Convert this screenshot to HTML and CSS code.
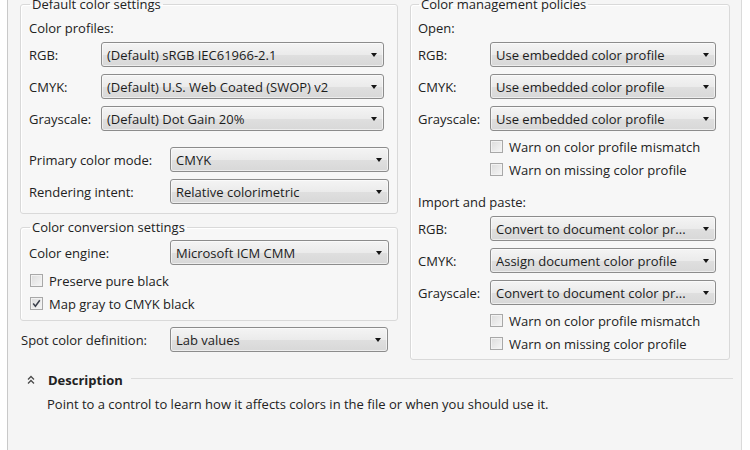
FILE: index.html
```html
<!DOCTYPE html>
<html>
<head>
<meta charset="utf-8">
<link rel="stylesheet" href="styles.css">
</head>
<body>
<div class="window">
  <div class="columns">
    <div class="col-left">
      <fieldset class="group g-default">
        <legend>Default color settings</legend>
        <div class="caption">Color profiles:</div>
        <div class="row first"><span class="label lw-s">RGB:</span><div class="select sw-profile"><span class="value">(Default) sRGB IEC61966-2.1</span><span class="arrow"></span></div></div>
        <div class="row"><span class="label lw-s">CMYK:</span><div class="select sw-profile"><span class="value">(Default) U.S. Web Coated (SWOP) v2</span><span class="arrow"></span></div></div>
        <div class="row"><span class="label lw-s">Grayscale:</span><div class="select sw-profile"><span class="value">(Default) Dot Gain 20%</span><span class="arrow"></span></div></div>
        <div class="row section"><span class="label lw-l">Primary color mode:</span><div class="select sw-mode"><span class="value">CMYK</span><span class="arrow"></span></div></div>
        <div class="row"><span class="label lw-l">Rendering intent:</span><div class="select sw-mode"><span class="value">Relative colorimetric</span><span class="arrow"></span></div></div>
      </fieldset>
      <fieldset class="group g-conv">
        <legend>Color conversion settings</legend>
        <div class="row"><span class="label lw-l">Color engine:</span><div class="select sw-mode"><span class="value">Microsoft ICM CMM</span><span class="arrow"></span></div></div>
        <label class="check first"><span class="box"></span><span>Preserve pure black</span></label>
        <label class="check"><span class="box checked"><svg viewBox="0 0 11 11" width="11" height="11"><path d="M2.2 5.6 L4.4 8.2 L8.8 2.2" fill="none" stroke="#3a3f4a" stroke-width="1.5"/></svg></span><span>Map gray to CMYK black</span></label>
      </fieldset>
      <div class="row spot"><span class="label lw-spot">Spot color definition:</span><div class="select sw-spot"><span class="value">Lab values</span><span class="arrow"></span></div></div>
    </div>
    <div class="col-right">
      <fieldset class="group g-policies">
        <legend>Color management policies</legend>
        <div class="caption">Open:</div>
        <div class="row first"><span class="label lw-s">RGB:</span><div class="select sw-policy"><span class="value">Use embedded color profile</span><span class="arrow"></span></div></div>
        <div class="row"><span class="label lw-s">CMYK:</span><div class="select sw-policy"><span class="value">Use embedded color profile</span><span class="arrow"></span></div></div>
        <div class="row"><span class="label lw-s">Grayscale:</span><div class="select sw-policy"><span class="value">Use embedded color profile</span><span class="arrow"></span></div></div>
        <label class="check indent first"><span class="box"></span><span>Warn on color profile mismatch</span></label>
        <label class="check indent"><span class="box"></span><span>Warn on missing color profile</span></label>
        <div class="caption import">Import and paste:</div>
        <div class="row first"><span class="label lw-s">RGB:</span><div class="select sw-policy"><span class="value">Convert to document color pr...</span><span class="arrow"></span></div></div>
        <div class="row"><span class="label lw-s">CMYK:</span><div class="select sw-policy"><span class="value">Assign document color profile</span><span class="arrow"></span></div></div>
        <div class="row"><span class="label lw-s">Grayscale:</span><div class="select sw-policy"><span class="value">Convert to document color pr...</span><span class="arrow"></span></div></div>
        <label class="check indent first"><span class="box"></span><span>Warn on color profile mismatch</span></label>
        <label class="check indent"><span class="box"></span><span>Warn on missing color profile</span></label>
      </fieldset>
    </div>
  </div>
  <div class="description">
    <div class="desc-head">
      <svg class="chev" viewBox="0 0 8 10" width="8" height="10"><path d="M1 4.5 L4 1.5 L7 4.5 M1 8.5 L4 5.5 L7 8.5" fill="none" stroke="#4a4a4a" stroke-width="1.3"/></svg>
      <span class="desc-title">Description</span>
      <span class="desc-rule"></span>
    </div>
    <p class="desc-text">Point to a control to learn how it affects colors in the file or when you should use it.</p>
  </div>
</div>
</body>
</html>
```
FILE: styles.css
```css
html, body {
  margin: 0;
  padding: 0;
  background: #ffffff;
}
body {
  width: 750px;
  height: 450px;
  overflow: hidden;
  font-family: "Open Sans", "Noto Sans", sans-serif;
  font-size: 13px;
  line-height: 16px;
  color: #222222;
}
.window {
  margin-left: 7px;
  width: 735px;
  height: 450px;
  box-sizing: border-box;
  border-left: 1px solid #c9c9c9;
  border-right: 1px solid #dadada;
  background: #f5f5f5;
  padding: 0 11px 0 12px;
}
.columns {
  display: flex;
  gap: 12px;
  align-items: flex-start;
}
.col-left { width: 378px; }
.col-right { width: 320px; }

.group {
  margin: 0;
  min-width: 0;
  box-sizing: border-box;
  border: 1px solid #d9d9d9;
  border-radius: 3px;
  box-shadow: inset 1px 1px 0 #ffffff;
  background: #f7f7f7;
}
.group legend {
  padding: 0 2px;
  margin-left: 1px;
  line-height: 16px;
}
.g-default {
  margin-top: -4px;
  padding: 8px 8px 9px 8px;
}
.g-conv {
  margin-top: 5px;
  padding: 5px 8px 5px 8px;
}
.g-policies {
  margin-top: -4px;
  padding: 8px 7px 4px 7px;
}
.caption { height: 16px; }
.caption.import { margin-top: 13px; }

.row {
  display: flex;
  align-items: center;
  height: 25px;
  margin-top: 7px;
}
.row.first { margin-top: 6px; }
.g-conv .row:first-of-type { margin-top: 0; }
.row.section { margin-top: 16px; }
.row.spot { margin-top: 6px; }

.label { flex: none; white-space: nowrap; }
.lw-s { width: 72px; }
.lw-l { width: 141px; }
.lw-spot { width: 149px; padding-left: 1px; }

.select {
  flex: none;
  height: 25px;
  box-sizing: border-box;
  display: flex;
  align-items: center;
  border: 1px solid #8c8c8c;
  border-radius: 3px;
  background: linear-gradient(#f4f4f4, #ebebeb 50%, #dfdfdf 52%, #d8d8d8);
  box-shadow: inset 0 0 0 1px rgba(255,255,255,0.55);
  padding: 0 6px 0 5px;
}
.sw-profile { width: 283px; }
.sw-mode { width: 219px; }
.sw-spot { width: 218px; }
.sw-policy { width: 226px; }
.value {
  flex: 1;
  white-space: nowrap;
  overflow: hidden;
  color: #1c1c1c;
}
.arrow {
  flex: none;
  width: 0;
  height: 0;
  border-left: 3.5px solid transparent;
  border-right: 3.5px solid transparent;
  border-top: 4px solid #151515;
}

.check {
  display: flex;
  align-items: center;
  height: 23px;
  padding-left: 1px;
}
.check.first { margin-top: 4px; }
.check.indent { padding-left: 72px; }
.box {
  flex: none;
  width: 13px;
  height: 13px;
  box-sizing: border-box;
  border: 1px solid #a8a8a8;
  background: linear-gradient(135deg, #dcdcdc, #f6f6f6);
  box-shadow: inset 0 0 0 1px #f2f2f2;
  margin-right: 6px;
  display: flex;
  align-items: center;
  justify-content: center;
}
.box svg { display: block; }

.description {
  margin-top: 12px;
  padding-left: 7px;
  margin-right: -3px;
}
.desc-head {
  display: flex;
  align-items: center;
  height: 16px;
}
.chev { flex: none; margin-right: 13px; }
.desc-title { font-weight: bold; flex: none; }
.desc-rule {
  flex: 1;
  height: 1px;
  background: #dcdcdc;
  margin-left: 8px;
  margin-top: -3px;
}
.desc-text {
  margin: 8px 0 0 20px;
}
```
